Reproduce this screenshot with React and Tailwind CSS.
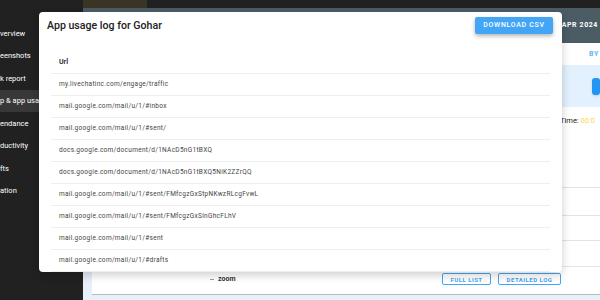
import React from "react";

const rows = [
  "my.livechatinc.com/engage/traffic",
  "mail.google.com/mail/u/1/#inbox",
  "mail.google.com/mail/u/1/#sent/",
  "docs.google.com/document/d/1NAcD5nG1tBXQ",
  "docs.google.com/document/d/1NAcD5nG1tBXQ5NiK2ZZrQQ",
  "mail.google.com/mail/u/1/#sent/FMfcgzGxStpNKwzRLcgFvwL",
  "mail.google.com/mail/u/1/#sent/FMfcgzGxSlnGhcFLhV",
  "mail.google.com/mail/u/1/#sent",
  "mail.google.com/mail/u/1/#drafts",
];

const menu = [
  "verview",
  "eenshots",
  "k report",
  "p & app usage",
  "endance",
  "ductivity",
  "fts",
  "ation",
];

export default function App() {
  return (
    <div
      className="relative w-[600px] h-[300px] overflow-hidden flex bg-[#e7eff9]"
      style={{ fontFamily: "Roboto, 'Liberation Sans', sans-serif" }}
    >
      {/* Sidebar */}
      <div className="w-[83px] h-full bg-[#212121] flex flex-col pt-[22px] shrink-0">
        {menu.map((m, i) => (
          <div
            key={m}
            className={`h-[22.5px] flex items-center whitespace-nowrap text-[7.5px] text-white ${
              i === 3 ? "bg-[#383838]" : ""
            }`}
          >
            {m}
          </div>
        ))}
      </div>

      {/* Main */}
      <div className="flex-1 flex flex-col min-w-0">
        <div className="h-[8px] bg-[#212121] flex shrink-0">
          <div className="w-[64px] h-full bg-[#3a3425]" />
        </div>
        <div className="h-[35px] bg-[#4b5c65] flex items-center justify-end pr-[2px] shrink-0">
          <span className="text-[7px] font-bold tracking-[0.6px] text-white whitespace-nowrap">
            APR 2024
          </span>
        </div>
        <div className="flex-1 pl-[9px] pb-[5px] flex flex-col min-h-0">
          <div className="flex-1 bg-white border-b border-[#b3bcc8] flex flex-col min-h-0">
            <div className="h-[22px] flex items-center pl-[497px] shrink-0">
              <span className="text-[7px] font-bold tracking-[0.6px] text-[#64b5f6] whitespace-nowrap">
                BY
              </span>
            </div>
            <div className="h-[42px] bg-[#e3f0fd] flex items-center pl-[500px] shrink-0">
              <div className="w-[40px] h-[17px] rounded-[3px] bg-[#2196f3] shadow" />
            </div>
            <div className="h-[28px] flex items-center pl-[468px] shrink-0 whitespace-nowrap text-[7.5px] text-[#222]">
              Time:&nbsp;<span className="text-[#ffd54f]">00:0</span>
            </div>
            <div className="h-[53px] shrink-0 border-b border-[#e4e4e4]" />
            <div className="h-[28px] shrink-0 border-b border-[#e4e4e4]" />
            <div className="h-[25px] shrink-0 border-b border-[#e4e4e4]" />
            <div className="h-[26px] shrink-0 border-b border-[#e4e4e4]" />
            <div className="flex-1 flex items-center pl-[118px] pr-[39px] pb-[3px]">
              <span className="w-[4px] h-[1px] bg-[#9e9e9e] mr-[4px]" />
              <span className="text-[7px] font-bold text-[#333]">zoom</span>
              <div className="flex-1" />
              <div className="h-[12px] w-[49px] border border-[#42a5f5] rounded-[2px] flex items-center justify-center text-[6px] font-bold tracking-[0.5px] text-[#42a5f5]">
                FULL LIST
              </div>
              <div className="h-[12px] w-[63px] ml-[7px] border border-[#42a5f5] rounded-[2px] flex items-center justify-center text-[6px] font-bold tracking-[0.5px] text-[#42a5f5]">
                DETAILED LOG
              </div>
            </div>
          </div>
        </div>
      </div>

      {/* Modal */}
      <div className="absolute left-[39px] top-[12px] w-[523px] h-[260px] bg-white rounded-[4px] shadow-[0_3px_10px_rgba(0,0,0,0.2)] overflow-hidden flex flex-col">
        <div className="h-[40px] flex items-start justify-between pl-[8px] pr-[9px] shrink-0">
          <div className="text-[10.6px] font-medium text-[#212121] mt-[7px] leading-[14px]">
            App usage log for Gohar
          </div>
          <div className="mt-[5px] w-[78px] h-[17px] bg-[#42a5f5] rounded-[2px] shadow-[0_2px_4px_rgba(0,0,0,0.3)] flex items-center justify-center text-[7px] font-medium tracking-[0.7px] text-white">
            DOWNLOAD CSV
          </div>
        </div>
        <div className="mx-[12px] flex flex-col">
          <div className="h-[22px] border-b border-[#eeeeee] flex items-center pl-[8px] text-[7px] font-bold text-[#333]">
            Url
          </div>
          {rows.map((r, i) => (
            <div
              key={i}
              className="h-[22px] border-b border-[#eeeeee] flex items-center pl-[8px] text-[6.5px] tracking-[0.3px] text-[#444] whitespace-nowrap"
            >
              {r}
            </div>
          ))}
        </div>
      </div>
    </div>
  );
}
